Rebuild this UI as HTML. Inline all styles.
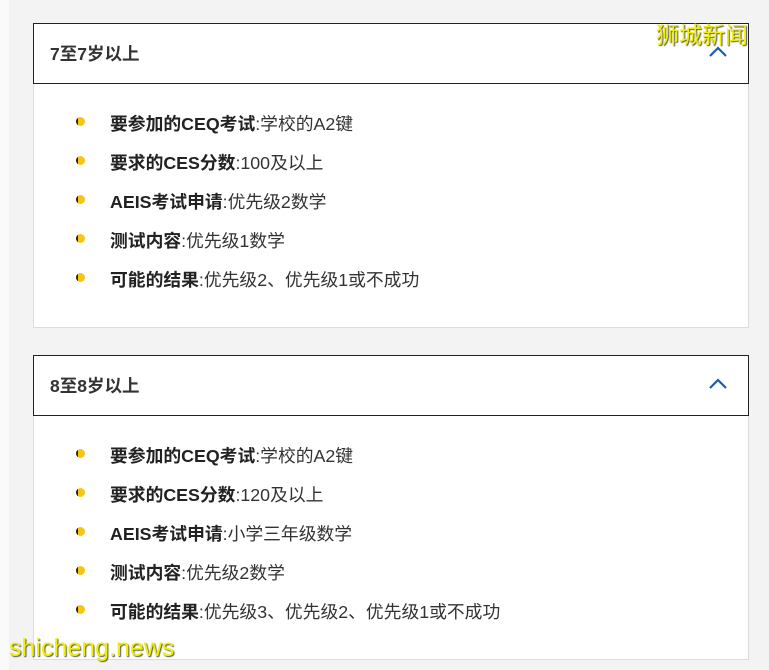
<!DOCTYPE html><html><head><meta charset="utf-8"><style>
body{margin:0;width:769px;height:670px;background:#f3f3f4;font-family:"Liberation Sans","Noto Sans CJK SC",sans-serif;position:relative;overflow:hidden}
.strip{position:absolute;left:0;top:0;width:9px;height:670px;background:#fafafa}
.hd{position:absolute;left:33px;width:714px;height:59px;border:1px solid #222;background:#fff;box-sizing:content-box}
.hd span{position:absolute;left:16px;top:17px;font-size:17.5px;font-weight:bold;color:#333}
.hd svg{position:absolute;right:20px;top:22px}
.bd{position:absolute;left:33px;width:714px;background:#fff;border:1px solid #ddd;border-top:none}
.it{position:absolute;left:76px;font-size:17.8px;color:#333;white-space:nowrap}
.it b{color:#222}
.dot{position:absolute;left:0;top:7px;width:9px;height:9px;border-radius:50%;background:#f5c518;overflow:hidden}
.dot:before{content:"";position:absolute;left:0;top:0;width:2px;height:9px;background:#222}
.it .t{margin-left:34px}
.wm{position:absolute;color:#f0f000;text-shadow:1px 1px 1px #555;}
</style></head><body>
<div class="strip"></div>
<div class="hd" style="top:23px"><span>7至7岁以上</span><svg width="20" height="12"><path d="M2 10 L10 2 L18 10" fill="none" stroke="#1a5fb4" stroke-width="2.2"/></svg></div>
<div class="bd" style="top:84px;height:243px"></div>
<div class="it" style="top:110px"><i class="dot"></i><span class="t"><b>要参加的CEQ考试</b>:学校的A2键</span></div>
<div class="it" style="top:149px"><i class="dot"></i><span class="t"><b>要求的CES分数</b>:100及以上</span></div>
<div class="it" style="top:188px"><i class="dot"></i><span class="t"><b>AEIS考试申请</b>:优先级2数学</span></div>
<div class="it" style="top:227px"><i class="dot"></i><span class="t"><b>测试内容</b>:优先级1数学</span></div>
<div class="it" style="top:266px"><i class="dot"></i><span class="t"><b>可能的结果</b>:优先级2、优先级1或不成功</span></div>
<div class="hd" style="top:355px"><span>8至8岁以上</span><svg width="20" height="12"><path d="M2 10 L10 2 L18 10" fill="none" stroke="#1a5fb4" stroke-width="2.2"/></svg></div>
<div class="bd" style="top:416px;height:243px"></div>
<div class="it" style="top:442px"><i class="dot"></i><span class="t"><b>要参加的CEQ考试</b>:学校的A2键</span></div>
<div class="it" style="top:481px"><i class="dot"></i><span class="t"><b>要求的CES分数</b>:120及以上</span></div>
<div class="it" style="top:520px"><i class="dot"></i><span class="t"><b>AEIS考试申请</b>:小学三年级数学</span></div>
<div class="it" style="top:559px"><i class="dot"></i><span class="t"><b>测试内容</b>:优先级2数学</span></div>
<div class="it" style="top:598px"><i class="dot"></i><span class="t"><b>可能的结果</b>:优先级3、优先级2、优先级1或不成功</span></div>
<div class="wm" style="left:656px;top:16px;font-size:23px">狮城新闻</div>
<div class="wm" style="left:9px;top:634px;font-size:25px">shicheng.news</div>
</body></html>
